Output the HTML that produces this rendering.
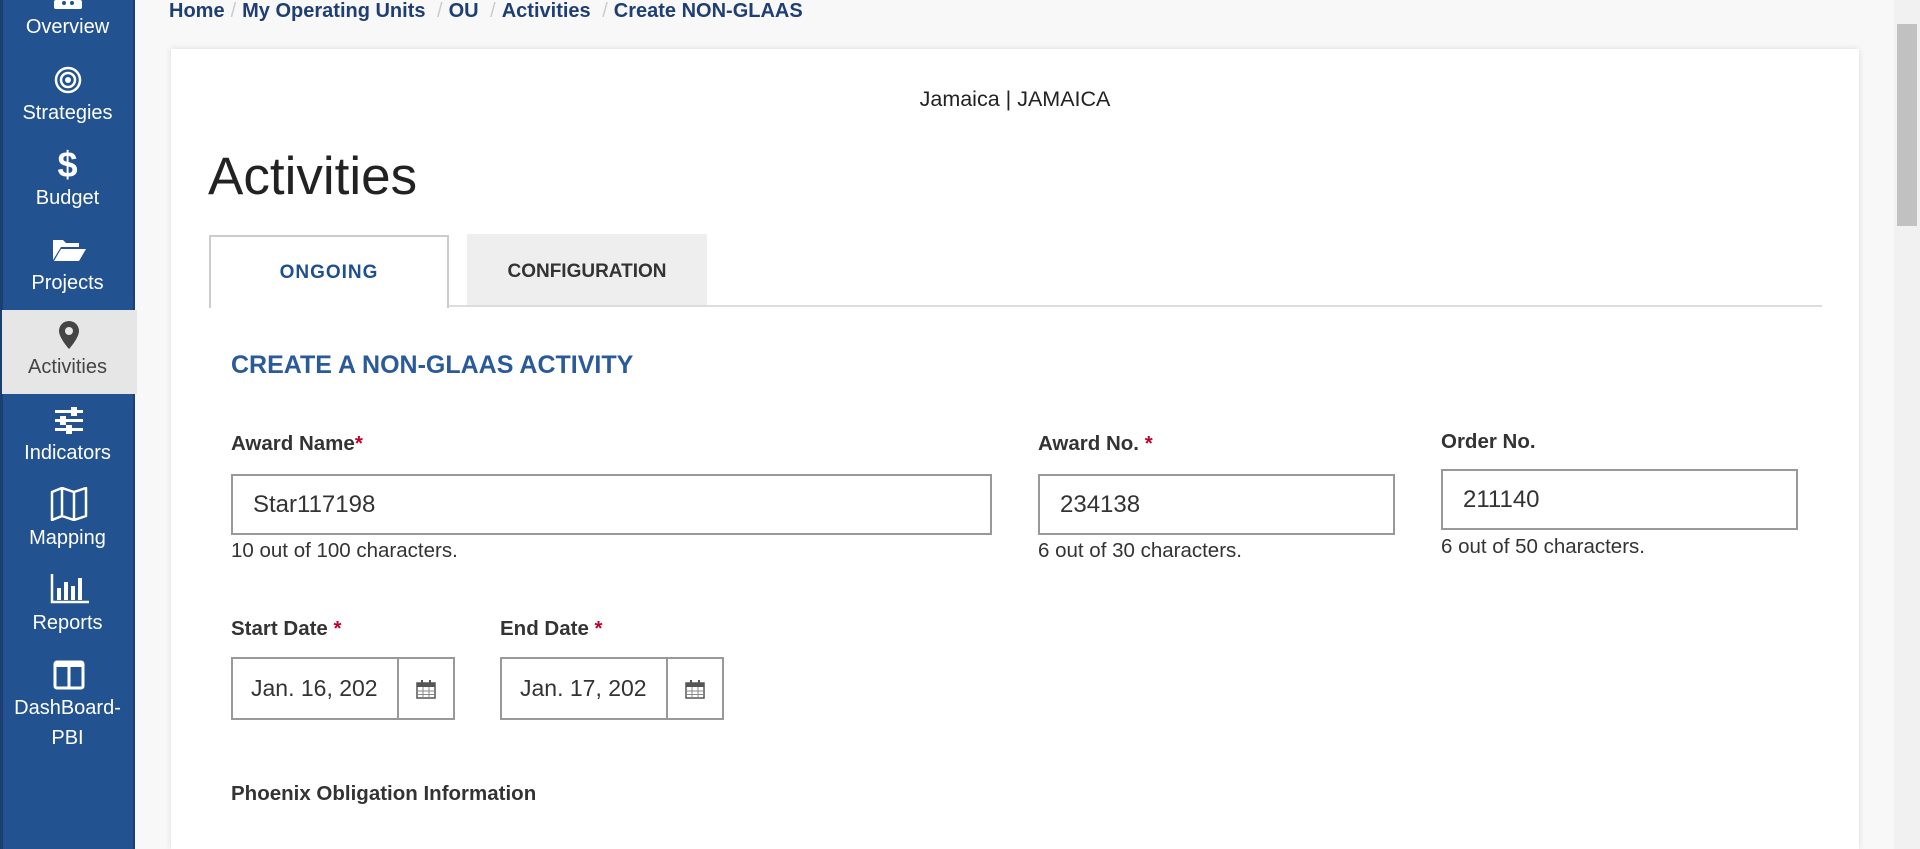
<!DOCTYPE html>
<html><head><meta charset="utf-8"><style>
*{box-sizing:border-box;margin:0;padding:0}
html{overflow:hidden;width:1920px;height:849px}
body{width:1920px;height:849px;overflow:hidden;background:#f8f8f8;font-family:"Liberation Sans",Arial,sans-serif;position:relative;color:#333}
.sb{position:absolute;left:0;top:0;width:135px;height:849px;background:#22528f;border-left:3px solid #1a3f70;border-right:2px solid #1a3f70}
.it{position:absolute;left:0;width:135px;text-align:center;color:#fff;font-size:20px}
.act{position:absolute;left:2px;top:310px;width:135px;height:84px;background:#e6e6e6}
.ab{position:absolute;white-space:nowrap}
.bc{top:0px;left:169px;font-size:20px;color:#1f3f73;font-weight:bold}
.bc span{color:#ccc;font-weight:normal;margin:0 6px}
.card{position:absolute;left:171px;top:49px;width:1688px;height:800px;background:#fff;box-shadow:0 0 6px rgba(0,0,0,.12)}
.lbl{font-size:20.5px;font-weight:bold;color:#333}
.req{color:#c0002a}
.inp{position:absolute;border:2px solid #999;background:#fff;font-size:24px;color:#333;padding-left:20px;display:flex;align-items:center}
.hint{font-size:20.5px;color:#333}
.cal{position:absolute;right:0;top:0;bottom:0;width:56px;border-left:2px solid #999;display:flex;align-items:center;justify-content:center}
</style></head><body>
<div class="sb"></div>
<div class="act"></div>
<svg class="ab" style="left:52px;top:0" width="32" height="12"><rect x="2" y="0" width="28" height="9" rx="2" fill="#fff"/><circle cx="12" cy="3" r="2" fill="#22528f"/><circle cx="20" cy="3" r="2" fill="#22528f"/></svg>
<div class="it" style="top:16px">Overview</div>
<svg class="ab" style="left:54px;top:66px" width="28" height="28"><circle cx="14" cy="14" r="12" fill="none" stroke="#fff" stroke-width="2.5"/><circle cx="14" cy="14" r="7" fill="none" stroke="#fff" stroke-width="2.5"/><circle cx="14" cy="14" r="3" fill="#fff"/></svg>
<div class="it" style="top:102px">Strategies</div>
<div class="it" style="top:144px;font-size:36px;font-weight:bold">$</div>
<div class="it" style="top:187px">Budget</div>
<svg class="ab" style="left:52px;top:236px" width="34" height="26"><path d="M1 4h10l3 3h13v4H9L1 24z" fill="#fff"/><path d="M9 13h25l-7 12H2z" fill="#fff"/></svg>
<div class="it" style="top:272px">Projects</div>
<svg class="ab" style="left:58px;top:320px" width="22" height="30"><path d="M11 1a10 10 0 0 0-10 10c0 7 10 18 10 18s10-11 10-18A10 10 0 0 0 11 1z" fill="#444"/><circle cx="11" cy="11" r="4" fill="#e6e6e6"/></svg>
<div class="it" style="top:356px;color:#444">Activities</div>
<svg class="ab" style="left:54px;top:407px" width="30" height="28"><g fill="#fff"><rect x="1" y="3" width="28" height="3"/><rect x="1" y="12" width="28" height="3"/><rect x="1" y="21" width="28" height="3"/><rect x="17" y="0" width="6" height="9"/><rect x="6" y="9" width="6" height="9"/><rect x="12" y="18" width="6" height="9"/></g></svg>
<div class="it" style="top:442px">Indicators</div>
<svg class="ab" style="left:50px;top:487px" width="38" height="34"><path d="M2 5l10-4 12 4 12-4v28l-12 4-12-4-10 4z M12 1v28 M24 5v28" fill="none" stroke="#fff" stroke-width="2.5" stroke-linejoin="round"/></svg>
<div class="it" style="top:527px">Mapping</div>
<svg class="ab" style="left:50px;top:574px" width="40" height="30"><path d="M2 0v28h37" fill="none" stroke="#fff" stroke-width="2.5"/><g fill="#fff"><rect x="7" y="14" width="4" height="12"/><rect x="14" y="8" width="4" height="18"/><rect x="21" y="12" width="4" height="14"/><rect x="28" y="4" width="4" height="22"/></g></svg>
<div class="it" style="top:612px">Reports</div>
<svg class="ab" style="left:53px;top:660px" width="32" height="30"><rect x="2" y="2" width="28" height="26" rx="2" fill="none" stroke="#fff" stroke-width="3"/><rect x="2" y="2" width="28" height="5" fill="#fff"/><line x1="16" y1="2" x2="16" y2="28" stroke="#fff" stroke-width="3"/></svg>
<div class="it" style="top:697px">DashBoard-</div>
<div class="it" style="top:727px">PBI</div>

<div class="ab bc">Home<span>/</span>My Operating Units <span>/</span>OU <span>/</span>Activities <span>/</span>Create NON-GLAAS</div>

<div class="card"></div>
<div class="ab" style="left:0;width:2030px;text-align:center;top:87px;font-size:21.5px;color:#222">Jamaica | JAMAICA</div>
<div class="ab" style="left:208px;top:146px;font-size:53px;color:#222">Activities</div>
<div class="ab" style="left:209px;top:235px;width:240px;height:73px;background:#fff;border:2px solid #ccc;border-bottom:none;text-align:center;line-height:72px;font-size:19px;font-weight:bold;color:#1f4f8f;letter-spacing:1px">ONGOING</div>
<div class="ab" style="left:467px;top:234px;width:240px;height:72px;background:#eee;text-align:center;line-height:76px;font-size:19px;font-weight:bold;color:#333">CONFIGURATION</div>
<div class="ab" style="left:449px;top:305px;width:1373px;height:2px;background:#ddd"></div>
<div class="ab" style="left:231px;top:351px;font-size:25px;font-weight:bold;color:#2a5a98">CREATE A NON-GLAAS ACTIVITY</div>

<div class="ab lbl" style="left:231px;top:432px">Award Name<span class="req">*</span></div>
<div class="inp" style="left:231px;top:474px;width:761px;height:61px">Star117198</div>
<div class="ab hint" style="left:231px;top:539px">10 out of 100 characters.</div>

<div class="ab lbl" style="left:1038px;top:432px">Award No. <span class="req">*</span></div>
<div class="inp" style="left:1038px;top:474px;width:357px;height:61px">234138</div>
<div class="ab hint" style="left:1038px;top:539px">6 out of 30 characters.</div>

<div class="ab lbl" style="left:1441px;top:430px">Order No.</div>
<div class="inp" style="left:1441px;top:469px;width:357px;height:61px">211140</div>
<div class="ab hint" style="left:1441px;top:535px">6 out of 50 characters.</div>

<div class="ab lbl" style="left:231px;top:617px">Start Date <span class="req">*</span></div>
<div class="inp" style="left:231px;top:657px;width:224px;height:63px;padding-left:18px;font-size:23px">Jan. 16, 202<div class="cal"><svg width="20" height="20"><rect x="1" y="4" width="18" height="15" fill="none" stroke="#555" stroke-width="1.5"/><rect x="1" y="4" width="18" height="4" fill="#555"/><path d="M1 12h18M1 15.5h18M7 8v11M13 8v11" stroke="#888"/><rect x="5" y="1" width="2" height="5" fill="#555"/><rect x="13" y="1" width="2" height="5" fill="#555"/></svg></div></div>
<div class="ab lbl" style="left:500px;top:617px">End Date <span class="req">*</span></div>
<div class="inp" style="left:500px;top:657px;width:224px;height:63px;padding-left:18px;font-size:23px">Jan. 17, 202<div class="cal"><svg width="20" height="20"><rect x="1" y="4" width="18" height="15" fill="none" stroke="#555" stroke-width="1.5"/><rect x="1" y="4" width="18" height="4" fill="#555"/><path d="M1 12h18M1 15.5h18M7 8v11M13 8v11" stroke="#888"/><rect x="5" y="1" width="2" height="5" fill="#555"/><rect x="13" y="1" width="2" height="5" fill="#555"/></svg></div></div>

<div class="ab lbl" style="left:231px;top:782px">Phoenix Obligation Information</div>

<div class="ab" style="left:1894px;top:0;width:26px;height:849px;background:#f1f1f1"></div>
<div class="ab" style="left:1897px;top:24px;width:20px;height:202px;background:#c1c1c1"></div>
</body></html>
